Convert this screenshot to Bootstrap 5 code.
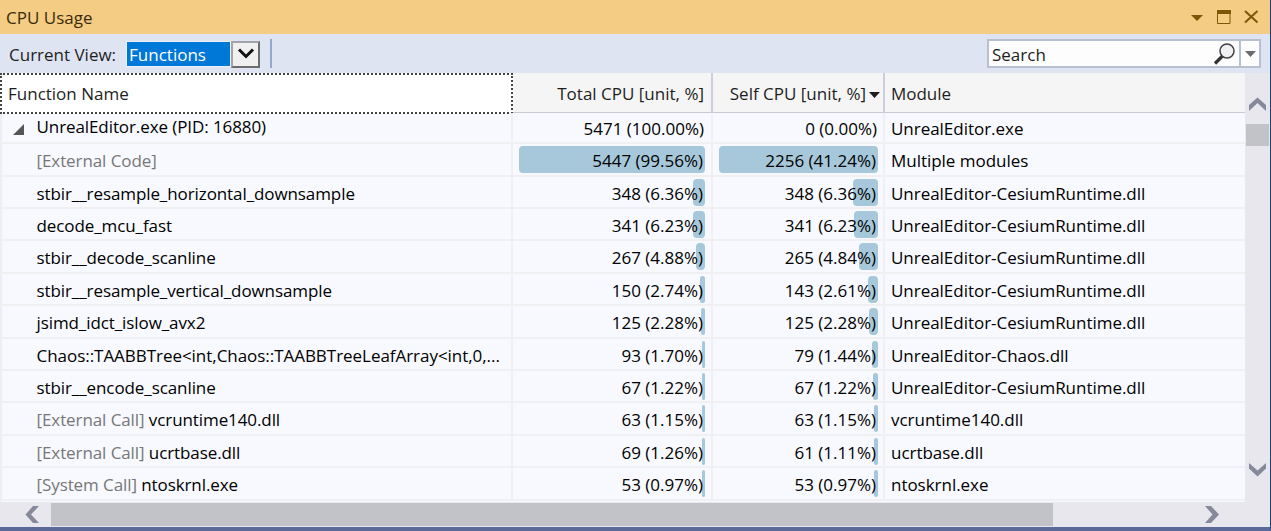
<!DOCTYPE html>
<html lang="en">
<head>
<meta charset="utf-8">
<meta name="viewport" content="width=device-width, initial-scale=1">
<title>CPU Usage</title>
<link href="https://cdn.jsdelivr.net/npm/bootstrap@5.3.0/dist/css/bootstrap.min.css" rel="stylesheet">
<style>
body{font-family:"Open Sans","Noto Sans",sans-serif;font-size:17px;line-height:24px;color:#1e1e1e;background:#e7e7ed}
.panel{height:531px;border-right:1px solid #1f3f7c;border-bottom:4px solid #5b6998}
.titlebar{height:34px;background:#f4cc83;color:#3c2c0c;padding:1px 10px 0 6px}
.toolstrip{height:39px;background:#dfe4f3;padding:2px 9px 0 9px}
.combo{margin-left:11px}
.combo-text{width:103px;height:24px;background:#0078d7;color:#fff;outline:1px solid #eef3fb;line-height:25px;padding-left:2px;margin-top:-1px}
.combo-btn{width:29px;height:27px;background:#f0f0f0;border:2px solid #6d6d6d;border-top-color:#a4a4a8;border-left-color:#a4a4a8;margin-left:1px;margin-top:-1px}
.tool-sep{width:2px;height:29px;background:#96a7cf;margin-left:10px;margin-top:-2px}
.find{width:274px;height:29px;border:2px solid #b8c0d0;background:#fdfdfd;margin-top:-2px}
.find-text{padding-left:3px;line-height:27px}
.find-drop{width:20px;border-left:2px solid #b8c0d0}
.grid-row{display:grid;grid-template-columns:513px 200px 172px 1fr}
.grid-head{height:40px;background:#f5f5f5;border-bottom:1px solid #c9c9d4;line-height:41px}
.grid-head>div{border-right:2px solid #cccedb;white-space:nowrap}
.grid-head>div:last-child{border-right:0}
.grid-head>.head-focus{background:#fff;border:2px dotted #444;padding-left:6px;line-height:37px}
.h-total{padding-right:7px}
.h-self{padding-right:3px}
.grid-body{height:389px;background:#f8f9fe;overflow:hidden;border-left:2px solid #efeff3}
.grid-body .grid-row{height:32.43px;grid-template-columns:511px 200px 172px 1fr;border-bottom:2px solid #f0f0f2;line-height:33px;color:#000}
.grid-body .grid-row:first-child{height:31.1px;line-height:31px}
.grid-body .grid-row:first-child .fn{line-height:28px}
.grid-body .grid-row>div{border-right:2px solid #f0f0f2;min-width:0;white-space:nowrap}
.grid-body .grid-row>div:last-child{border-right:0}
.fn{padding-left:34.500px;letter-spacing:-.09px}
.fn.long{letter-spacing:-.04px}
.num{padding:2px 6px 0 6px;line-height:29px;text-align:right}
.num.self{padding-right:5px}
.heat{right:0;top:0;height:27px;background:#a6c8da;border-radius:4px}
.num span{right:2px;top:0}
.root span{right:1px;line-height:27px}
.mod{padding-left:6px;letter-spacing:-.03px}
.dim{color:#777}
.tri{left:11px;top:11px}
.vbar{width:25px;background:#e7e7ed}
.vthumb{height:22px;background:#c2c3c9;margin:12px 1px 0 1px}
.hbar{height:25px;background:#e7e7ed}
.hthumb{width:1002px;height:23px;background:#c2c3c9}
</style>
</head>
<body class="overflow-hidden">
<main class="panel d-flex flex-column overflow-hidden">
  <header class="titlebar d-flex align-items-center flex-shrink-0">
    <span class="me-auto">CPU Usage</span>
    <svg width="70" height="18" viewBox="0 0 70 18" fill="none"><path d="M1 6h12l-6 6z" fill="#7d5608"/><path d="M27.500 3v11.500h12.500V3z" stroke="#7d5608"/><path d="M27 1h14v4H27z" fill="#7d5608"/><path d="M55 2l12.500 11.500M67.500 2L55 13.500" stroke="#7d5608" stroke-width="2"/></svg>
  </header>
  <div class="toolstrip d-flex align-items-center flex-shrink-0">
    <span>Current View:</span>
    <div class="d-flex align-items-center me-auto combo">
      <div class="combo-text">Functions</div>
      <div class="combo-btn d-flex align-items-center justify-content-center"><svg width="18" height="14" viewBox="0 0 18 14"><path d="M2 2.500l7 7 7-7" fill="none" stroke="#111" stroke-width="3"/></svg></div>
      <div class="tool-sep"></div>
    </div>
    <div class="find d-flex">
      <span class="find-text me-auto">Search</span>
      <svg width="24" height="25" viewBox="0 0 24 25"><circle cx="16" cy="10" r="7" fill="#f0f0f3" stroke="#414141" stroke-width="1.500"/><path d="M11.500 15l-7.500 7.500" stroke="#333" stroke-width="3.200"/></svg>
      <div class="find-drop d-flex align-items-center justify-content-center ms-1"><svg width="11" height="6"><path d="M0 0h11L5.500 6z" fill="#6a6a6f"/></svg></div>
    </div>
  </div>
  <div class="d-flex flex-shrink-0">
    <div class="flex-grow-1">
      <div class="grid-row grid-head">
        <div class="head-focus">Function Name</div>
        <div class="text-end h-total">Total CPU [unit, %]</div>
        <div class="d-flex justify-content-end align-items-center h-self">Self CPU [unit, %]<svg class="mt-1" width="14" height="7" viewBox="-3 0 14 7"><path d="M0 0h11L5.500 6z" fill="#1e1e1e"/></svg></div>
        <div class="mod">Module</div>
      </div>
      <div class="grid-body" id="rows"></div>
    </div>
    <div class="vbar d-flex flex-column">
      <svg width="25" height="39" viewBox="0 0 25 39"><path d="M4 38v-6l8.500-7.500L21 32v6l-8.500-8z" fill="#868999"/></svg>
      <div class="vthumb"></div>
      <svg class="mt-auto mb-4" width="25" height="18" viewBox="0 0 25 18"><path d="M4 3v5.500l8.500 8 8.500-8V3l-8.500 7.500z" fill="#868999"/></svg>
    </div>
  </div>
  <div class="hbar d-flex align-items-center flex-shrink-0">
    <svg width="51" height="23" viewBox="0 0 51 23"><path d="M39 3h-6l-7.500 8.500L33 20h6l-8-8.500z" fill="#868999"/></svg>
    <div class="hthumb"></div>
    <svg width="191" height="23" viewBox="0 0 191 23"><path d="M152 3h6l8 8.500-8 8.500h-6l7.500-8.500z" fill="#868999"/></svg>
  </div>
</main>
<script>
const ces = 'UnrealEditor-CesiumRuntime.dll';
const data = [
  ['', 'UnrealEditor.exe (PID: 16880)', '5471', '100.00', '0', '0.00', 'UnrealEditor.exe'],
  ['[External Code]', '', '5447', '99.56', '2256', '41.24', 'Multiple modules'],
  ['', 'stbir__resample_horizontal_downsample', '348', '6.36', '348', '6.36', ces],
  ['', 'decode_mcu_fast', '341', '6.23', '341', '6.23', ces],
  ['', 'stbir__decode_scanline', '267', '4.88', '265', '4.84', ces],
  ['', 'stbir__resample_vertical_downsample', '150', '2.74', '143', '2.61', ces],
  ['', 'jsimd_idct_islow_avx2', '125', '2.28', '125', '2.28', ces],
  ['', 'Chaos::TAABBTree<int,Chaos::TAABBTreeLeafArray<int,0,...', '93', '1.70', '79', '1.44', 'UnrealEditor-Chaos.dll'],
  ['', 'stbir__encode_scanline', '67', '1.22', '67', '1.22', ces],
  ['[External Call]', 'vcruntime140.dll', '63', '1.15', '63', '1.15', 'vcruntime140.dll'],
  ['[External Call]', 'ucrtbase.dll', '69', '1.26', '61', '1.11', 'ucrtbase.dll'],
  ['[System Call]', 'ntoskrnl.exe', '53', '0.97', '53', '0.97', 'ntoskrnl.exe']
];
const esc = s => s.replace(/</g, '&lt;');
const cell = (n, p, max, cls, root) => `<div class="num ${cls}"><div class="position-relative h-100${root ? ' root' : ''}">${root ? '' :
  `<div class="heat position-absolute" style="width:max(3px,${(p / max * 100).toFixed(2)}%)"></div>`}<span class="position-absolute">${n} (${p}%)</span></div></div>`;
document.getElementById('rows').innerHTML = data.map((r, i) => `<div class="grid-row"><div class="fn position-relative${r[1].length > 50 ? ' long' : ''}">${
  i ? '' : '<svg class="tri position-absolute" width="11" height="11"><path d="M11 0v11H0z" fill="#555"/></svg>'}${
  r[0] ? `<span class="dim">${r[0]}</span> ` : ''}${esc(r[1])}</div>${cell(r[2], r[3], 99.56, 'total', !i)}${cell(r[4], r[5], 41.24, 'self', !i)}<div class="mod">${r[6]}</div></div>`).join('');
</script>
<script src="https://cdn.jsdelivr.net/npm/bootstrap@5.3.0/dist/js/bootstrap.bundle.min.js"></script>
</body>
</html>
